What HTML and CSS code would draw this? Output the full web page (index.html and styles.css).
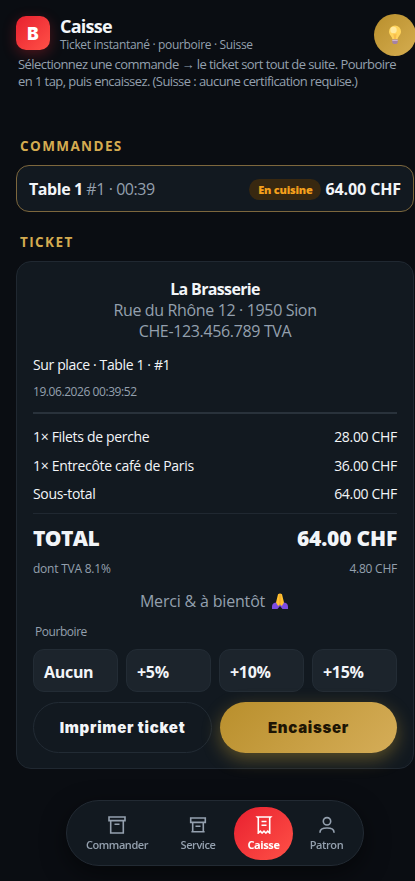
FILE: index.html
```html
<!DOCTYPE html>
<html lang="fr">
<head>
<meta charset="utf-8">
<meta name="viewport" content="width=device-width, initial-scale=1">
<title>Caisse</title>
<link rel="stylesheet" href="styles.css">
</head>
<body>
<main class="page">
  <header class="top">
    <div class="logo">B</div>
    <div class="heading">
      <h1>Caisse</h1>
      <p>Ticket instantané · pourboire · Suisse</p>
    </div>
    <button class="hint" aria-label="Astuce">
      <svg width="14" height="20" viewBox="0 0 14 20">
        <path d="M7 .6a6 6 0 0 0-6 6c0 3.6 3 4.600 3.400 7.900h5.200C10 11.200 13 10.200 13 6.600a6 6 0 0 0-6-6z" fill="#ffd45c"/>
        <circle cx="5.500" cy="5" r="3.200" fill="#ffeaa0"/>
        <path d="M5.300 8.500 6.200 14h1.600l.9-5.500L7 9.500z" fill="#f8bc4c"/>
        <path d="M4.300 14.400h5.400v3L8.600 19H5.400l-1.100-1.600z" fill="#a582a5"/>
        <path d="M4.300 15.500h5.400" stroke="#d9c2d8" stroke-width=".8"/>
      </svg>
    </button>
  </header>
  <div class="intro">
    <span>Sélectionnez une commande → le ticket sort tout de suite. Pourboire</span>
    <span>en 1 tap, puis encaissez. (Suisse : aucune certification requise.)</span>
  </div>

  <h2 class="label label-orders">Commandes</h2>
  <section class="order">
    <span class="order-name"><b>Table 1</b> <span>#1 · 00:39</span></span>
    <span class="badge">En cuisine</span>
    <b class="order-sum">64.00 CHF</b>
  </section>

  <h2 class="label label-ticket">Ticket</h2>
  <section class="ticket">
    <div class="shop">
      <b>La Brasserie</b>
      <span>Rue du Rhône 12 · 1950 Sion</span>
      <span>CHE-123.456.789 TVA</span>
    </div>
    <div class="place">Sur place · Table 1 · #1</div>
    <div class="date">19.06.2026 00:39:52</div>
    <div class="rule"></div>
    <div class="line"><span>1× Filets de perche</span><span>28.00 CHF</span></div>
    <div class="line"><span>1× Entrecôte café de Paris</span><span>36.00 CHF</span></div>
    <div class="line line-sub"><span>Sous-total</span><span>64.00 CHF</span></div>
    <div class="total"><span class="total-word">TOTAL</span><span class="total-sum">64.00 CHF</span></div>
    <div class="vat"><span>dont TVA 8.1%</span><span>4.80 CHF</span></div>
    <div class="thanks"><span>Merci &amp; à bientôt</span>
      <svg width="18" height="17" viewBox="0 0 18 17">
        <path d="M1 16v-2.500C1 11 3 9.500 5.500 9.500L9 12l3.500-2.500C15 9.500 17 11 17 13.500V16h-5.500L9 13l-2.500 3z" fill="#7b4ce0"/>
        <path d="M7 1.200Q9-.2 11 1.200L13 9.500 10.800 13 9 11.500 7.200 13 5 9.500z" fill="#ffc02e"/>
        <path d="M9 1.500V11" stroke="#e8912d" stroke-width=".7"/>
      </svg>
    </div>
    <div class="tip-label">Pourboire</div>
    <div class="tips">
      <button>Aucun</button><button>+5%</button><button>+10%</button><button>+15%</button>
    </div>
    <div class="actions">
      <button class="print">Imprimer ticket</button>
      <button class="pay">Encaisser</button>
    </div>
  </section>
</main>

<nav class="dock">
  <a class="tab tab-order">
    <svg width="18" height="18" viewBox="0 0 18 18"><path d="M1 1h16v3.600H1zM2.700 4.600V17h12.600V4.600M6.500 8.300h5"/></svg>
    <span>Commander</span>
  </a>
  <a class="tab tab-service">
    <svg width="18" height="18" viewBox="0 0 18 18"><path d="M1.700 2h14.600v4.400H1.700zM3.700 6.400v9.400M14.300 6.400v9.400M2.400 15.800h13.200M6.500 10.300h5"/></svg>
    <span>Service</span>
  </a>
  <a class="tab tab-active">
    <svg width="18" height="18" viewBox="0 0 18 18"><path d="M2.300 1h13.400l-1 1v15l-2-1.800-1.800 1.800L9 15.200 7.100 17l-1.800-1.800-2 1.800V2zM6.500 5.500h5M6.500 9.300h5"/></svg>
    <span>Caisse</span>
  </a>
  <a class="tab tab-owner">
    <svg width="18" height="18" viewBox="0 0 18 18"><circle cx="9" cy="5.300" r="3.700"/><path d="M2 16.800v-.6c0-3 3-4.200 7-4.200s7 1.200 7 4.200v.6"/></svg>
    <span>Patron</span>
  </a>
</nav>
</body>
</html>
```

FILE: styles.css
```css
* { box-sizing: border-box; }

html { background: #0a0d12; }

body {
  margin: 0;
  height: 881px;
  overflow: hidden;
  background: #0a0d12;
  color: #f2f5f8;
  font-family: "Open Sans", "Noto Sans", sans-serif;
}

h1, h2, p { margin: 0; }

button {
  margin: 0;
  padding: 0;
  border: 0;
  color: inherit;
  font-family: inherit;
}

span, b { white-space: nowrap; }

.page {
  width: 415px;
  padding: 14px 0 0 16px;
}

.top {
  display: flex;
  height: 42px;
  width: 400px;
}

.logo {
  width: 34px;
  height: 34px;
  margin-top: 2px;
  border-radius: 10px;
  background: linear-gradient(135deg, #e8202f, #ff5147);
  box-shadow: 0 4px 14px rgba(235, 40, 50, .3);
  color: #fff;
  font-family: Inter, sans-serif;
  font-size: 17px;
  font-weight: 900;
  line-height: 37px;
  text-align: center;
}

.heading { flex: 1; margin-left: 10px; }

.heading h1 {
  font-size: 18px;
  font-weight: 700;
  line-height: 25px;
  letter-spacing: -.75px;
}

.heading p {
  margin-top: -2px;
  color: #94a0ae;
  font-size: 12px;
  line-height: 16px;
  letter-spacing: -.33px;
}

.hint {
  display: grid;
  place-items: center;
  width: 42px;
  height: 42px;
  border-radius: 50%;
  background: linear-gradient(135deg, #b98f2c, #d5ad50);
}

.intro {
  display: flex;
  flex-direction: column;
  padding-left: 2px;
  color: #94a0ae;
  font-size: 13px;
  line-height: 17px;
  letter-spacing: -.57px;
}

.label {
  padding-left: 4px;
  color: #d4ab50;
  font-size: 13.5px;
  font-weight: 700;
  line-height: 18px;
  letter-spacing: 1.4px;
  text-transform: uppercase;
}

.label-orders { margin-top: 47px; }
.label-ticket { margin-top: 21px; }

.order {
  display: flex;
  align-items: center;
  width: 398px;
  height: 47px;
  margin-top: 9.500px;
  padding: 1px 12px 0 12px;
  border: 1px solid #7d673d;
  border-radius: 13px;
  background: #121920;
  font-size: 16px;
}

.order-name { flex: 1; letter-spacing: -.44px; }
.order-name span { color: #94a0ae; }

.badge {
  height: 21px;
  margin: 2px 5px 0 0;
  padding: 0 8px 0 9px;
  border-radius: 11px;
  background: #382810;
  color: #f5a01c;
  font-size: 11px;
  font-weight: 800;
  line-height: 21px;
  letter-spacing: -.22px;
}

.order-sum { letter-spacing: -.12px; }

.ticket {
  width: 398px;
  height: 508px;
  margin-top: 10.500px;
  padding: 17px 16px 0 16px;
  border: 1px solid #202831;
  border-radius: 15px;
  background: #121920;
}

.shop {
  display: flex;
  flex-direction: column;
  align-items: center;
  font-size: 16px;
  line-height: 21px;
}

.shop b { letter-spacing: -.65px; }
.shop span { color: #94a0ae; letter-spacing: -.35px; }

.place {
  margin-top: 13px;
  font-size: 14px;
  line-height: 20px;
  letter-spacing: -.37px;
}

.date {
  margin-top: 8px;
  color: #94a0ae;
  font-size: 12px;
  line-height: 18px;
  letter-spacing: -.43px;
}

.rule {
  height: 2px;
  margin: 11px 0 8px;
  background: #29323b;
}

.line {
  display: flex;
  justify-content: space-between;
  height: 29px;
  font-size: 14px;
  line-height: 29px;
  letter-spacing: -.32px;
}

.line-sub { height: 34px; border-bottom: 1px solid #202831; line-height: 28px; }

.total {
  display: flex;
  justify-content: space-between;
  height: 46px;
  font-size: 21px;
  font-weight: 800;
  line-height: 48px;
}

.total-word { letter-spacing: -.6px; }
.total-sum { letter-spacing: -.2px; }

.vat {
  display: flex;
  justify-content: space-between;
  color: #94a0ae;
  font-size: 12px;
  line-height: 18px;
  letter-spacing: -.23px;
}

.thanks {
  display: flex;
  align-items: center;
  justify-content: center;
  gap: 6px;
  height: 22px;
  margin-top: 12px;
  padding-right: 1px;
  color: #94a0ae;
  font-size: 16px;
  letter-spacing: -.18px;
}

.tip-label {
  margin-top: 11px;
  padding-left: 2px;
  color: #94a0ae;
  font-size: 12px;
  line-height: 18px;
  letter-spacing: -.45px;
}

.tips {
  display: grid;
  grid-template-columns: repeat(4, 1fr);
  gap: 8px;
  margin-top: 8px;
}

.tips button {
  height: 43px;
  padding: 2px 0 0 10px;
  border: 1px solid #232c35;
  border-radius: 11px;
  background: #1c242c;
  font-size: 16px;
  font-weight: 700;
  letter-spacing: -.3px;
  text-align: left;
}

.actions {
  display: grid;
  grid-template-columns: 179px 1fr;
  gap: 8px;
  margin-top: 10px;
}

.actions button {
  height: 51px;
  border-radius: 26px;
  font-family: Inter, sans-serif;
  font-size: 15px;
  font-weight: 900;
  letter-spacing: .7px;
}

.print { border: 1px solid #222b34; background: transparent; }

.actions .pay {
  background: linear-gradient(135deg, #b98f2c, #d5ad58);
  box-shadow: 0 6px 18px rgba(201, 160, 50, .4);
  color: #1e1504;
}

.dock {
  position: fixed;
  left: 66px;
  bottom: 15px;
  display: flex;
  align-items: center;
  width: 298px;
  height: 66px;
  padding: 0 3px 0 5px;
  border: 1px solid #222a33;
  border-radius: 33px;
  background: #121920;
  box-shadow: 0 8px 24px rgba(0, 0, 0, .5);
}

.tab {
  display: flex;
  flex: none;
  flex-direction: column;
  align-items: center;
  height: 53px;
  padding-top: 9px;
  color: #94a0ae;
  font-size: 11px;
  font-weight: 600;
  line-height: 16px;
  letter-spacing: -.42px;
}

.tab svg {
  margin-bottom: 3px;
  fill: none;
  stroke: currentColor;
  stroke-width: 1.6;
}

.tab-order { width: 90px; }
.tab-service { width: 72px; }
.tab-owner { width: 67px; }

.tab-active {
  width: 59px;
  border-radius: 27px;
  background: linear-gradient(135deg, #e8202f, #ff5147);
  color: #fff;
  font-weight: 700;
}
```
